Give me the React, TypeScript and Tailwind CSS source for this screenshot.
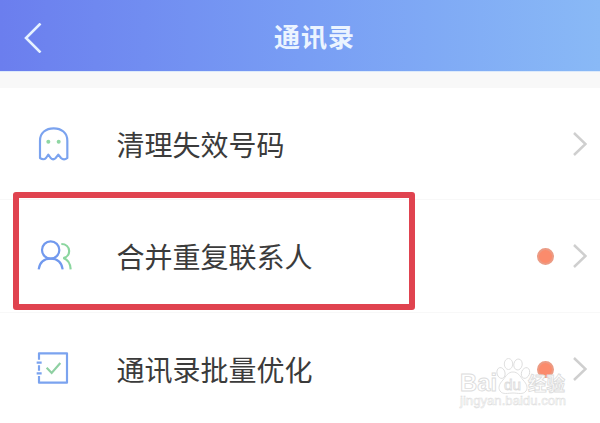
import React from "react";

function GhostIcon() {
  return (
    <svg className="h-[60px] w-[60px]" viewBox="0 -3 180 180" fill="none">
      <path
        d="M45 129V77C45 53 63 40 86 40s41 13 41 37v52c-7 6-14 5-19 0l-8-10-8 10c-5 5-10 5-15 0l-7-10-7 10c-5 5-11 5-18 0Z"
        stroke="#7ba3ef"
        strokeWidth="6.5"
        strokeLinejoin="round"
      />
      <circle cx="70" cy="80" r="6" fill="#8fd6a3" />
      <circle cx="101" cy="80" r="6" fill="#8fd6a3" />
    </svg>
  );
}

function PeopleIcon() {
  return (
    <svg className="h-[60px] w-[60px]" viewBox="0 -9 180 180" fill="none" strokeWidth="6.5">
      <path d="M109 45c29 0 31 38 6 42 12 4 21 17 22 34" stroke="#8bd69f" />
      <circle cx="77" cy="63" r="26" stroke="#7199ee" />
      <path d="M41 121c3-20 16-32 36-32s33 12 36 32" stroke="#7199ee" />
    </svg>
  );
}

function NotebookIcon() {
  return (
    <svg className="h-[60px] w-[60px]" viewBox="0 0 180 180" fill="none" strokeWidth="6.5">
      <path d="M42 62V43h84v88H42v-20M42 79v16M35 71h15M35 103h15" stroke="#7ba3ef" strokeLinejoin="round" />
      <path d="m65 86 15 16 26-30" stroke="#8fd0a2" />
    </svg>
  );
}

function Watermark() {
  return (
    <svg
      className="absolute left-[455px] top-[355px] h-[55px] w-[115px]"
      viewBox="0 0 115 55"
      fill="#ffffff"
      stroke="#dcdcdc"
      strokeWidth="0.9"
      fontFamily='"Liberation Sans", "Noto Sans CJK SC", sans-serif'
    >
      <text x="5" y="36" fontSize="24" fontWeight="bold" textLength="37" lengthAdjust="spacingAndGlyphs">
        Bai
      </text>
      <text x="73" y="36" fontSize="19" fontWeight="bold" textLength="37" lengthAdjust="spacingAndGlyphs">
        经验
      </text>
      <text x="5" y="50" fontSize="12.500" strokeWidth="0.500" textLength="106" lengthAdjust="spacingAndGlyphs">
        jingyan.baidu.com
      </text>
      <ellipse cx="46" cy="18" rx="4" ry="5.500" transform="rotate(-15 46 18)" />
      <ellipse cx="53.500" cy="9" rx="4.200" ry="5.500" />
      <ellipse cx="63" cy="9.500" rx="4.200" ry="5.500" transform="rotate(10 63 9.500)" />
      <ellipse cx="70.500" cy="18" rx="4" ry="5.500" transform="rotate(20 70.500 18)" />
      <path d="M58 17c5 0 7 4 10 8 4 4 5 8 3 11-3 4-8 2-13 2s-10 2-13-2c-2-3-1-7 3-11 3-4 5-8 10-8Z" />
      <text x="49" y="35" fontSize="15" strokeWidth="0.800" textLength="17" lengthAdjust="spacingAndGlyphs">
        du
      </text>
    </svg>
  );
}

const rows = [
  { label: "清理失效号码", icon: <GhostIcon />, dot: false },
  { label: "合并重复联系人", icon: <PeopleIcon />, dot: true },
  { label: "通讯录批量优化", icon: <NotebookIcon />, dot: true },
];

export default function App() {
  return (
    <div className="relative h-[423px] w-[600px] overflow-hidden bg-white font-['Noto_Sans_CJK_SC',sans-serif]">
      {/* Header */}
      <header className="grid h-[71px] grid-cols-[274px_1fr] items-center bg-linear-to-r from-[#6b7eee] via-[#789df4] to-[#89b9f6] pt-1">
        <svg className="ml-6 h-[30px] w-[18px]" viewBox="0 0 18 30" fill="none">
          <path d="M16.500 0.500 2 15l14.500 14.500" stroke="#e6f2ff" strokeWidth="2.600" />
        </svg>
        <h1 className="pb-[3px] text-[26px] leading-none font-bold tracking-[1px] text-[#ebf4ff]">通讯录</h1>
      </header>
      <div className="h-[17px] border-t border-[#dceafb] bg-[#f8f8f8]" />

      {/* Menu rows */}
      <ul>
        {rows.map((row) => (
          <li
            key={row.label}
            className="flex h-[113px] items-center border-b border-[#f8f8f8] pr-[13px] pl-[25px] first:h-[112px]"
          >
            {row.icon}
            <span className="ml-[31.5px] flex-1 text-[28px] leading-none text-[#3b3b3b]">{row.label}</span>
            {row.dot && <span className="mr-[19px] h-[17px] w-[17px] rounded-full border-2 border-[#eb9b84] bg-[#fb8b6c]" />}
            <svg className="h-[24px] w-[14px]" viewBox="0 0 14 24" fill="none">
              <path d="M1 1l11.500 11L1 23" stroke="#cfcfcf" strokeWidth="2.500" />
            </svg>
          </li>
        ))}
      </ul>

      {/* Highlight frame */}
      <div className="absolute top-[192px] left-[13px] h-[118px] w-[402px] rounded-[3px] border-[6px] border-[#e0434f]" />
      <Watermark />
    </div>
  );
}
